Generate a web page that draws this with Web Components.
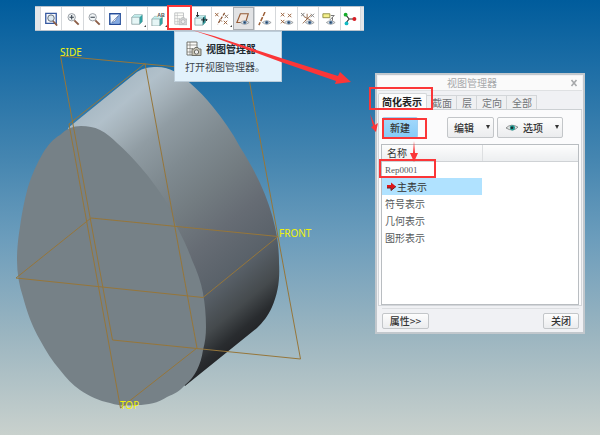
<!DOCTYPE html>
<html lang="zh-CN">
<head>
<meta charset="utf-8">
<title>视图管理器</title>
<style>
html, body { margin: 0; height: 100%; }
body { font: 10px/16px "Noto Sans CJK SC", sans-serif; color: #333; overflow: hidden; }
</style>
</head>
<body>
<cad-desktop>
  <cad-scene slot="scene"></cad-scene>
  <view-toolbar slot="toolbar"></view-toolbar>
  <tool-tip slot="tip"><span slot="title">视图管理器</span>打开视图管理器。</tool-tip>
  <view-manager slot="window"></view-manager>
  <callout-marks slot="marks"></callout-marks>
</cad-desktop>

<script>
function define(name, html) {
  const t = document.createElement('template');
  t.innerHTML = html;
  customElements.define(name, class extends HTMLElement {
    constructor() {
      super();
      this.attachShadow({ mode: 'open' }).append(t.content.cloneNode(true));
    }
  });
}

/* Desktop: model canvas with floating windows */
define('cad-desktop', `
<style>
:host { display: block; position: relative; min-height: 100vh; overflow: hidden;
  background: linear-gradient(#005c9c 0%, #1a6ca5 14%, #4485b0 36%, #6c9dbc 55%, #9bb5c0 77%, #c9d1cd 100%); }
::slotted(*) { position: absolute; }
::slotted(cad-scene), ::slotted(callout-marks) { left: 0; top: 0; }
::slotted(view-toolbar) { left: 35px; top: 6px; }
::slotted(tool-tip) { left: 174px; top: 31px; }
::slotted(view-manager) { left: 375px; top: 73px; }
::slotted(callout-marks) { pointer-events: none; }
</style>
<slot name="scene"></slot><slot name="toolbar"></slot><slot name="tip"></slot><slot name="window"></slot><slot name="marks"></slot>`);

/* Solid model with datum planes */
define('cad-scene', `
<style>
:host { display: block; }
svg { display: block; }
text { font: 10px/12px "Noto Sans", sans-serif; fill: #f1f20c; }
</style>
<svg width="600" height="435" viewBox="0 0 600 435" role="img" aria-label="三维模型">
  <defs>
    <linearGradient id="side" gradientUnits="userSpaceOnUse" x1="68" y1="128" x2="243" y2="339">
      <stop offset="0" stop-color="#a9bac5"/><stop offset=".06" stop-color="#b1c0ca"/>
      <stop offset=".13" stop-color="#a5b2ba"/><stop offset=".22" stop-color="#909ca3"/>
      <stop offset=".36" stop-color="#7f8a90"/><stop offset=".5" stop-color="#737c81"/>
      <stop offset=".64" stop-color="#666c74"/><stop offset=".79" stop-color="#596169"/>
      <stop offset=".9" stop-color="#454a4d"/><stop offset=".97" stop-color="#292c2f"/>
      <stop offset="1" stop-color="#242629"/>
    </linearGradient>
  </defs>
  <path fill="url(#side)" d="M68 128L137 72C143 68 149 67 157 67C170 67 181 74 190 83C198 90 206 98 213 107C223 119 232 132 240 147C247 158 254 170 260 183C267 198 272 213 275 227C278 240 279 252 279 263C280 280 278 293 272 307C268 316 263 322 257 328L185 386L120 300Z"/>
  <path fill="#768187" d="M81 126C88 126 94 127 100 130C106 133 112 138 117 143C134 158 150 177 163 197C169 206 173 217 177 227C183 238 188 249 192 260C197 271 201 282 203 293C205 304 206 316 206 327C206 335 205 343 203 350C202 357 200 364 197 370C194 376 190 381 185 385C180 391 174 394 167 397C158 403 148 405 137 405C128 406 119 406 110 403C99 401 89 396 80 390C73 385 66 378 60 370C52 361 46 351 40 340C32 326 27 312 23 297C19 285 17 273 17 260C17 246 19 233 20 227C22 212 25 198 28 187C32 174 37 163 43 153C48 145 53 139 60 135C66 129 73 126 81 126Z"/>
  <g fill="none" stroke="#96763a" stroke-width="1">
    <path d="M60.500 56L248 73.500L300.500 359L112.500 340Z"/>
    <path d="M145 63.500L69 124L120.500 408L197 348Z"/>
    <path d="M91 218L278 236.500L203 297.500L16 278Z"/>
  </g>
  <text x="60" y="56">SIDE</text>
  <text x="279" y="237">FRONT</text>
  <text x="120" y="409">TOP</text>
</svg>`);

/* Toolbar icons, each on a 16 x 16 grid */
const eye = '<path d="M5 12Q10 8 15 12Q10 16 5 12Z" fill="#dfe5ea" stroke="#85898d" stroke-width=".8"/><circle cx="10" cy="12" r="2" fill="#557ca4"/><circle cx="10" cy="12" r=".8" fill="#26384c"/>';
const cube = '<path d="M2 6L5 3H14V11L11 14H2Z" fill="#e6f6f6" stroke="#6d8788" stroke-width=".7"/><path d="M2 6H11L14 3H5Z" fill="#c3eeed"/><path d="M11 6L14 3V11L11 14Z" fill="#2fa3a5"/><path d="M2 6H11V14" fill="none" stroke="#6f8e90" stroke-width=".6"/>';
const lens = s => `<path d="M9.500 9.500L14.500 14.500" stroke="#8b5d45" stroke-width="2.200"/><circle cx="6.500" cy="6" r="4.200" fill="#f1f5f7" stroke="#8e959b"/>${s}`;
const camera = (a, b) => `<path d="M2 1H12V14H2Z" fill="#fbfbf8" stroke="${a}" stroke-width=".9"/><path d="M2 4H12M2 7.500H8M2 11H7M5 1V14" stroke="${a}" stroke-width=".6"/><path d="M7 8H9L10 6.500H13L14 8H16V14.500H7Z" fill="${b}" stroke="${a}" stroke-width=".9"/><circle cx="11.500" cy="11" r="2.200" fill="#eee" stroke="${a}"/>`;
const cross = (x, y, c = '#9a6440') => `<path d="M${x} ${y}l4 4m0 -4l-4 4" stroke="${c}" stroke-width="1.100"/>`;
const icons = [
  ['重新调整', '<path d="M2 1.500H14V13H2Z" fill="#f6f9ff" stroke="#3659a0" stroke-width="1.500"/><path d="M10 10L15 15.500" stroke="#8b5d45" stroke-width="2"/><circle cx="8" cy="7" r="3.700" fill="#dce9f1" stroke="#57616d"/>'],
  ['放大', lens('<path d="M4 6H9M6.500 3.500V8.500" stroke="#37414c" stroke-width="1.200"/>')],
  ['缩小', lens('<path d="M4 6H9" stroke="#37414c" stroke-width="1.200"/>')],
  ['重画', '<path d="M2 2H14V14H2Z" fill="#c2daf5" stroke="#264d99" stroke-width="1.500"/><path d="M3 3H13L4 12Z" fill="#f7fbff"/><path d="M13 3L13 13H3Z" fill="#84aae2"/><path d="M12 4L6 10L5 12L8 10.500Z" fill="#fff" stroke="#3d5b91" stroke-width=".6"/>'],
  ['显示样式', cube, 1],
  ['已保存方向', '<g transform="translate(-1 2)">' + cube + '</g><path d="M7 0H16V6H7Z" fill="#fff"/><text x="7" y="6">AB</text>', 1],
  ['视图管理器', camera('#b5b7b9', '#d4d5d6')],
  ['透视图', '<g transform="translate(-1 1)">' + cube + '</g><path d="M4 0V5M2.500 3.500L4 5.500L5.500 3.500M8 9H15M13.500 7.500L15 9L13.500 10.500M11 6V12" fill="none" stroke="#151c20"/>'],
  ['基准显示', cross(0, 1) + cross(10, 10) + '<path d="M11 1L3 14" stroke="#87502f" stroke-width="1.400" stroke-dasharray="3.500 1.500"/>' + cross(11, 3, '#8d7766') + '<path d="M5 8L8 11" stroke="#87502f"/>', 1],
  ['平面显示', '<path d="M1 12L5 2H14L11 12Z" fill="#f1e6df" stroke="#955b37" stroke-width="1.300"/>' + eye],
  ['轴显示', '<path d="M8 0L1 15" stroke="#9b5e36" stroke-width="1.700" stroke-dasharray="5 1.500"/>' + eye],
  ['点显示', cross(1, 1) + cross(9, 2) + cross(1, 9) + eye],
  ['坐标系显示', '<path d="M7 2V8L2 13M3 5L12 10M12 3L5 10" stroke="#8f6040" fill="none"/>' + cross(0, 1, '#777') + cross(11, 2, '#888') + eye],
  ['注释显示', '<path d="M1 2H9V6.500H1Z" fill="#f4f08b" stroke="#8a883e"/><path d="M10 4H14L9 9M12 6V10" stroke="#666" fill="none"/>' + eye],
  ['旋转中心', '<path d="M3 3L7 8L13 8M7 8L3 13" stroke="#333" fill="none" stroke-width="1.300"/><circle cx="3" cy="3" r="2.200" fill="#16ad2b"/><circle cx="13" cy="8" r="2.300" fill="#d71e25"/><circle cx="4" cy="13" r="2.200" fill="#14bbc4"/>']
];
define('view-toolbar', `
<style>
:host { display: block; }
nav { display: grid; grid-template-columns: repeat(15, 1fr); width: 321px; padding: 0 3px 0 5px;
  background: #e3e6e9; border: solid #b9c3cc; border-width: 1px 0; }
button { display: grid; place-items: center; position: relative; height: 23px; padding: 0; border: 0;
  border-left: 1px solid #d5d8db; background: #fff; }
button:last-child { border-right: 1px solid #d5d8db; }
button[aria-pressed="true"] { background: #e2e3e5; border: 1px solid #a9adb1; }
svg { width: 14px; height: 14px; }
text { font: bold 6px/8px "Liberation Sans", sans-serif; fill: #4b5054; }
i { position: absolute; right: 1px; bottom: 3px; border: 1px solid; border-color: transparent #444 #444 transparent; }
</style>
<nav aria-label="视图工具栏">${icons.map(([n, s, menu], k) =>
  `<button type="button" aria-label="${n}"${k === 9 ? ' aria-pressed="true"' : ''}><svg viewBox="0 0 16 16">${s}</svg>${menu ? '<i></i>' : ''}</button>`).join('')}</nav>`);

define('tool-tip', `
<style>
:host { display: block; box-sizing: border-box; min-width: 108px; padding: 8px 10px 6px; background: #e2f2fc;
  border: 1px solid #bdcdd9; color: #3c454c; }
header { display: flex; align-items: center; gap: 4px; height: 18px; font-weight: bold; color: #222b31; }
svg { width: 17px; height: 16px; }
p { margin: 1px 0 0; white-space: nowrap; }
</style>
<header><svg viewBox="0 0 17 16" aria-hidden="true">${camera('#666660', '#c8c4b3')}</svg><slot name="title"></slot></header>
<p><slot></slot></p>`);

define('push-button', `
<style>
:host { display: inline-block; }
button { display: flex; align-items: center; justify-content: center; gap: 4px; box-sizing: border-box; width: 100%; height: 100%;
  padding: 0; font: inherit; font-weight: 500; color: #333; border: 1px solid #c3c6c9; border-radius: 2px;
  background: linear-gradient(#fdfdfd, #ebecee); white-space: nowrap; }
:host([primary]) button { background: linear-gradient(#a2d8fb, #86ccf8); border-color: #9fd0f2; }
:host([menu]) button { justify-content: flex-end; padding-right: 3px; }
i { display: none; border: solid transparent; border-width: 4px 2px 0; border-top-color: #333; margin: 0 0 2px 8px; }
:host([menu]) i { display: block; }
</style>
<button type="button"><slot></slot><i></i></button>`);

define('view-manager', `
<style>
* { box-sizing: border-box; }
:host { display: block; box-sizing: border-box; width: 210px; padding: 1px; background: #f0f1f4; border: 2px solid #c2c8cd; }
header { display: grid; grid-template-columns: 1fr auto; align-items: center; height: 15px; background: #fafafa;
  border-bottom: 1px solid #dfe1e3; }
h1 { margin: 0; font: inherit; line-height: 14px; color: #a7a9ab; text-align: center; }
.x { width: 16px; height: 14px; padding: 0 1px 0 0; border: 0; background: none; display: grid; place-items: center; }
.tabs { display: flex; align-items: flex-end; height: 19px; border-bottom: 1px solid #ccd0d3; }
.tabs button { font: inherit; height: 14px; line-height: 13px; color: #717477; background: #eff0f2; border: solid #d3d6d9;
  border-width: 1px 1px 0 0; padding: 0 4px 0 5px; white-space: nowrap; }
.tabs button[aria-selected="true"] { height: 17px; line-height: 16px; padding: 0 4px 0 3px; margin-bottom: -1px; font-weight: bold; color: #222; background: #fcfcfc;
  border-width: 1px; border-bottom-color: #fcfcfc; border-radius: 2px 2px 0 0; }
.page { background: #fbfbfc; border: solid #d3d6da; border-width: 0 1px 1px; padding: 0 2px; }
.bar { display: flex; gap: 3px; padding: 7px 16px 6px 1px; }
.bar push-button { height: 21px; }
.new { width: 36px; margin-right: auto; }
.edit { width: 47px; }
.opt { width: 66px; }
.list { height: 161px; background: #fff; border: 1px solid #b9bdc1; }
table { width: 100%; border-collapse: collapse; table-layout: fixed; }
th { height: 16px; padding: 0 0 0 5px; line-height: 14px; font-weight: normal; text-align: left; background: linear-gradient(#fdfdfd, #eceef0); border-bottom: 1px solid #cfd2d5; }
th:first-child { width: 100px; border-right: 1px solid #dddfe1; }
td { height: 17px; padding: 0 0 0 3px; line-height: 16px; color: #55585b; }
.rep { font: 9px/16px "Liberation Serif", serif; }
.on { background: #b0e2ff; color: #333; }
.on div { display: flex; align-items: center; gap: 1px; padding-left: 2px; }
footer { display: flex; justify-content: space-between; margin: 2px 3px 0 4px; padding: 4px 0 2px; border-top: 1px solid #dcdee1; }
footer push-button { height: 16px; }
.prop { width: 47px; }
.close { width: 36px; }
svg { display: block; }
.eye { margin-right: 1px; }
</style>
<header><h1>视图管理器</h1><button class="x" type="button" aria-label="关闭窗口"><svg width="8" height="8" viewBox="0 0 8 8"><path d="M1.500 1L6.500 7M6.500 1L1.500 7" stroke="#a7a9ab" stroke-width="1.600"/></svg></button></header>
<div class="tabs" role="tablist">
  <button role="tab" aria-selected="true">简化表示</button><button role="tab">截面</button><button role="tab">层</button><button role="tab">定向</button><button role="tab">全部</button>
</div>
<div class="page">
  <div class="bar">
    <push-button class="new" primary>新建</push-button>
    <push-button class="edit" menu>编辑</push-button>
    <push-button class="opt" menu><svg class="eye" width="12" height="8" viewBox="0 0 14 8" aria-hidden="true"><path d="M0 4Q6 -2 14 3Q8 9 0 4Z" fill="#e4e6e6" stroke="#666c6c" stroke-width=".8"/><circle cx="7.500" cy="3.800" r="3" fill="#209b94"/><circle cx="7" cy="3.800" r="1.500" fill="#173030"/></svg>选项</push-button>
  </div>
  <div class="list"><table>
    <thead><tr><th>名称</th><th></th></tr></thead>
    <tbody>
      <tr><td class="rep">Rep0001</td><td></td></tr>
      <tr><td class="on"><div><svg width="9" height="9" viewBox="0 0 9 9" aria-hidden="true"><path d="M0 3H4V.500L9 4.500L4 8.500V6H0Z" fill="#dd1518"/><path d="M0 6H4V8.500L9 4.500" fill="none" stroke="#67272b"/></svg>主表示</div></td><td></td></tr>
      <tr><td>符号表示</td><td></td></tr>
      <tr><td>几何表示</td><td></td></tr>
      <tr><td>图形表示</td><td></td></tr>
    </tbody>
  </table></div>
</div>
<footer><push-button class="prop">属性&gt;&gt;</push-button><push-button class="close">关闭</push-button></footer>`);

/* Red boxes and arrows laid over the windows */
define('callout-marks', `
<style>:host { display: block; } svg { display: block; }</style>
<svg width="600" height="435" viewBox="0 0 600 435" aria-hidden="true">
  <g fill="none" stroke="#fb3638" stroke-width="2">
    <rect x="168" y="6" width="23" height="23"/>
    <rect x="370" y="88" width="62" height="21"/>
    <rect x="383" y="119" width="43" height="19"/>
    <rect x="380" y="160" width="55" height="17"/>
  </g>
  <g fill="#fb3638">
    <path d="M192 30L214 36L281 58L338 76L340 72L351 82L335 84L336 81L281 62L213 37Z"/>
    <path d="M370 114L375 125L378 123L376 132L371 127L373 126Z"/>
    <path d="M414 141L415 153L418 153L414 162L410 153L413 153Z"/>
  </g>
</svg>`);
</script>
</body>
</html>
